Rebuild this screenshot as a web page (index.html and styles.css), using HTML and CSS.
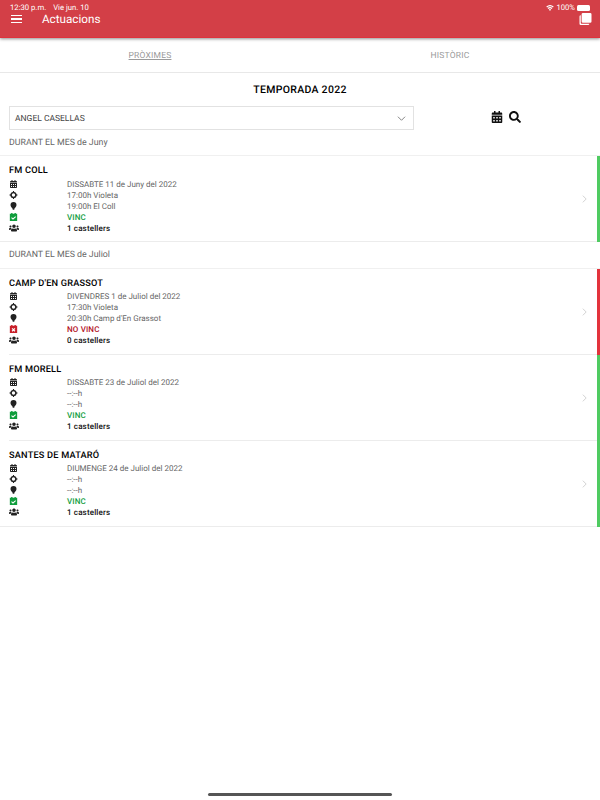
FILE: index.html
```html
<!DOCTYPE html>
<html lang="ca">
<head>
<meta charset="utf-8">
<title>Actuacions</title>
<link rel="stylesheet" href="styles.css">
</head>
<body>
<svg width="0" height="0" class="defs">
  <defs>
    <symbol id="cal" viewBox="0 0 448 512"><path d="M0 464c0 26.500 21.500 48 48 48h352c26.500 0 48-21.500 48-48V192H0v272zm320-196c0-6.600 5.400-12 12-12h40c6.600 0 12 5.400 12 12v40c0 6.600-5.400 12-12 12h-40c-6.600 0-12-5.400-12-12v-40zm0 128c0-6.600 5.400-12 12-12h40c6.600 0 12 5.400 12 12v40c0 6.600-5.400 12-12 12h-40c-6.600 0-12-5.400-12-12v-40zM192 268c0-6.600 5.400-12 12-12h40c6.600 0 12 5.400 12 12v40c0 6.600-5.400 12-12 12h-40c-6.600 0-12-5.400-12-12v-40zm0 128c0-6.600 5.400-12 12-12h40c6.600 0 12 5.400 12 12v40c0 6.600-5.400 12-12 12h-40c-6.600 0-12-5.400-12-12v-40zM64 268c0-6.600 5.400-12 12-12h40c6.600 0 12 5.400 12 12v40c0 6.600-5.400 12-12 12H76c-6.600 0-12-5.400-12-12v-40zm0 128c0-6.600 5.400-12 12-12h40c6.600 0 12 5.400 12 12v40c0 6.600-5.400 12-12 12H76c-6.600 0-12-5.400-12-12v-40zM400 64h-48V16c0-8.800-7.200-16-16-16h-32c-8.800 0-16 7.200-16 16v48H160V16c0-8.800-7.200-16-16-16h-32c-8.800 0-16 7.200-16 16v48H48C21.500 64 0 85.500 0 112v48h448v-48c0-26.500-21.500-48-48-48z"/></symbol>
    <symbol id="target" viewBox="0 0 24 24"><path d="M10.500 0h3v2.200a10 10 0 0 1 8.300 8.300H24v3h-2.200a10 10 0 0 1-8.300 8.300V24h-3v-2.200a10 10 0 0 1-8.300-8.300H0v-3h2.200a10 10 0 0 1 8.300-8.300zM12 7a5 5 0 1 0 0 10 5 5 0 0 0 0-10z"/></symbol>
    <symbol id="pin" viewBox="0 0 24 24"><path d="M12 0a9 9 0 0 1 9 9c0 5-5 9-7 12h-4C8 18 3 14 3 9a9 9 0 0 1 9-9zM9.500 22h5v2h-5z"/></symbol>
    <symbol id="calok" viewBox="0 0 24 24"><path d="M5 0h4v2h6V0h4v2h4v22H1V2h4zM17.500 9.500 10.500 16l-3.500-3-2 2.200 5.500 5 9-8.500z" fill-rule="evenodd"/></symbol>
    <symbol id="calno" viewBox="0 0 24 24"><path d="M5 0h4v2h6V0h4v2h4v22H1V2h4zM9 9l-2.500 2.500L9.500 14.500l-3 3L9 20l3-3 3 3 2.500-2.500-3-3 3-3L15 9l-3 3z" fill-rule="evenodd"/></symbol>
    <symbol id="users" viewBox="0 0 640 512"><path d="M96 224c35.300 0 64-28.700 64-64s-28.700-64-64-64-64 28.700-64 64 28.700 64 64 64zm448 0c35.300 0 64-28.700 64-64s-28.700-64-64-64-64 28.700-64 64 28.700 64 64 64zm32 32h-64c-17.600 0-33.500 7.100-45.100 18.600 40.300 22.100 68.900 62 75.100 109.400h66c17.700 0 32-14.300 32-32v-32c0-35.300-28.700-64-64-64zm-256 0c61.900 0 112-50.100 112-112S381.900 32 320 32 208 82.100 208 144s50.100 112 112 112zm76.800 32h-8.300c-20.800 10-43.900 16-68.500 16s-47.600-6-68.500-16h-8.300C179.600 288 128 339.600 128 403.200V432c0 26.500 21.500 48 48 48h288c26.500 0 48-21.500 48-48v-28.800c0-63.600-51.600-115.200-115.200-115.200zm-223.700-13.400C161.500 263.100 145.600 256 128 256H64c-35.300 0-64 28.700-64 64v32c0 17.700 14.300 32 32 32h65.900c6.300-47.400 34.900-87.300 75.200-109.400z"/></symbol>
  </defs>
</svg>

<header class="appbar">
  <div class="status">
    <div class="status-left"><span>12:30 p.m.</span><span>Vie jun. 10</span></div>
    <div class="status-right">
      <svg class="wifi" viewBox="0 0 16 12"><path d="M8 12 5.700 9.200a3.600 3.600 0 0 1 4.600 0zM4.600 7.900 3.200 6.200a7.500 7.500 0 0 1 9.600 0l-1.400 1.700a5.300 5.300 0 0 0-6.800 0zM2.100 4.900.6 3.100a11.500 11.500 0 0 1 14.800 0l-1.500 1.800a9.200 9.200 0 0 0-11.800 0z"/></svg>
      <span>100%</span>
      <span class="battery"></span>
    </div>
  </div>
  <div class="toolbar">
    <div class="toolbar-left">
      <span class="burger"><i></i><i></i><i></i></span>
      <span class="app-title">Actuacions</span>
    </div>
    <svg class="copy" viewBox="0 0 14 14"><path d="M4 0h8.500A1.500 1.500 0 0 1 14 1.500V10a1.500 1.500 0 0 1-1.500 1.500H4A1.500 1.500 0 0 1 2.500 10V1.500A1.500 1.500 0 0 1 4 0z"/><path d="M0 4a1.500 1.500 0 0 1 1.500-1.500v8.800c0 .7.500 1.200 1.200 1.200h8.800A1.500 1.500 0 0 1 10 14H1.500A1.500 1.500 0 0 1 0 12.500z"/></svg>
  </div>
</header>

<nav class="tabs">
  <div class="tab"><span class="tab-active">PRÒXIMES</span></div>
  <div class="tab"><span>HISTÒRIC</span></div>
</nav>

<h1 class="season">TEMPORADA 2022</h1>

<div class="filter">
  <div class="select">
    <span>ANGEL CASELLAS</span>
    <svg class="chev-down" viewBox="0 0 12 7"><path d="M1 1l5 5 5-5"/></svg>
  </div>
  <div class="filter-icons">
    <svg class="ficon"><use href="#cal"/></svg>
    <svg class="ficon" viewBox="0 0 512 512"><path d="M505 442.700 405.300 343c-4.500-4.500-10.600-7-17-7H372c27.600-35.300 44-79.700 44-128C416 93.100 322.900 0 208 0S0 93.100 0 208s93.100 208 208 208c48.300 0 92.700-16.400 128-44v16.300c0 6.400 2.500 12.500 7 17l99.700 99.700c9.400 9.400 24.600 9.400 33.900 0l28.300-28.300c9.400-9.400 9.400-24.600.1-34zM208 336c-70.700 0-128-57.200-128-128 0-70.700 57.200-128 128-128 70.700 0 128 57.200 128 128 0 70.700-57.200 128-128 128z"/></svg>
  </div>
</div>

<p class="month">DURANT EL MES de Juny</p>

<article class="card ok full first">
  <div class="card-body">
    <h2>FM COLL</h2>
    <div class="row"><svg class="ic"><use href="#cal"/></svg><span>DISSABTE 11 de Juny del 2022</span></div>
    <div class="row"><svg class="ic"><use href="#target"/></svg><span>17:00h Violeta</span></div>
    <div class="row"><svg class="ic"><use href="#pin"/></svg><span>19:00h El Coll</span></div>
    <div class="row yes"><svg class="ic"><use href="#calok"/></svg><span>VINC</span></div>
    <div class="row count"><svg class="ic"><use href="#users"/></svg><span>1 castellers</span></div>
  </div>
  <svg class="chev" viewBox="0 0 7 12"><path d="M1 1l5 5-5 5"/></svg>
</article>

<p class="month month-tall">DURANT EL MES de Juliol</p>

<article class="card bad">
  <div class="card-body">
    <h2>CAMP D'EN GRASSOT</h2>
    <div class="row"><svg class="ic"><use href="#cal"/></svg><span>DIVENDRES 1 de Juliol del 2022</span></div>
    <div class="row"><svg class="ic"><use href="#target"/></svg><span>17:30h Violeta</span></div>
    <div class="row"><svg class="ic"><use href="#pin"/></svg><span>20:30h Camp d'En Grassot</span></div>
    <div class="row no"><svg class="ic"><use href="#calno"/></svg><span>NO VINC</span></div>
    <div class="row count"><svg class="ic"><use href="#users"/></svg><span>0 castellers</span></div>
  </div>
  <svg class="chev" viewBox="0 0 7 12"><path d="M1 1l5 5-5 5"/></svg>
</article>

<article class="card ok">
  <div class="card-body">
    <h2>FM MORELL</h2>
    <div class="row"><svg class="ic"><use href="#cal"/></svg><span>DISSABTE 23 de Juliol del 2022</span></div>
    <div class="row"><svg class="ic"><use href="#target"/></svg><span>--:--h</span></div>
    <div class="row"><svg class="ic"><use href="#pin"/></svg><span>--:--h</span></div>
    <div class="row yes"><svg class="ic"><use href="#calok"/></svg><span>VINC</span></div>
    <div class="row count"><svg class="ic"><use href="#users"/></svg><span>1 castellers</span></div>
  </div>
  <svg class="chev" viewBox="0 0 7 12"><path d="M1 1l5 5-5 5"/></svg>
</article>

<article class="card ok full">
  <div class="card-body">
    <h2>SANTES DE MATARÓ</h2>
    <div class="row"><svg class="ic"><use href="#cal"/></svg><span>DIUMENGE 24 de Juliol del 2022</span></div>
    <div class="row"><svg class="ic"><use href="#target"/></svg><span>--:--h</span></div>
    <div class="row"><svg class="ic"><use href="#pin"/></svg><span>--:--h</span></div>
    <div class="row yes"><svg class="ic"><use href="#calok"/></svg><span>VINC</span></div>
    <div class="row count"><svg class="ic"><use href="#users"/></svg><span>1 castellers</span></div>
  </div>
  <svg class="chev" viewBox="0 0 7 12"><path d="M1 1l5 5-5 5"/></svg>
</article>

<div class="home-indicator"></div>
</body>
</html>
```

FILE: styles.css
```css
* { box-sizing: border-box; }
html, body { margin: 0; height: 100%; }
body {
  position: relative;
  width: 600px;
  height: 800px;
  overflow: hidden;
  background: #fff;
  font-family: Roboto, "Liberation Sans", sans-serif;
  color: #000;
  text-rendering: geometricPrecision;
}
.defs { position: absolute; }

.appbar {
  height: 38px;
  background: #d33f47;
  border-bottom: 1px solid #e0323c;
  box-shadow: 0 1px 3px rgba(0, 0, 0, .45);
  color: #fff;
  position: relative;
}
.status {
  height: 14px;
  padding: 1px 10px 0;
  display: flex;
  justify-content: space-between;
  align-items: center;
  font-size: 7.700px;
}
.status-left { display: flex; gap: 7px; }
.status-right { display: flex; align-items: center; gap: 2px; }
.wifi { width: 8px; height: 6px; fill: #fff; }
.battery {
  width: 13px;
  height: 6px;
  background: #fff;
  border-radius: 1.500px;
}
.toolbar {
  height: 10px;
  padding: 0 8px 0 11px;
  display: flex;
  justify-content: space-between;
  align-items: center;
}
.toolbar-left { display: flex; align-items: center; gap: 20px; }
.burger { display: flex; flex-direction: column; gap: 2px; width: 11px; }
.burger i { display: block; height: 1.500px; background: #fff; }
.app-title { font-size: 11.700px; line-height: 12px; }
.copy { width: 13px; height: 12px; fill: #fff; flex: none; }

.tabs {
  display: flex;
  height: 35px;
  padding-top: 1px;
  border-bottom: 1px solid #e8e8e8;
}
.tab {
  flex: 1;
  display: flex;
  align-items: center;
  justify-content: center;
  font-size: 8.500px;
  letter-spacing: .2px;
  color: #9a9a9a;
}
.tab-active { text-decoration: underline; }

.season {
  margin: 0;
  padding-top: 10px;
  height: 33px;
  font-size: 10.500px;
  line-height: 13px;
  font-weight: 500;
  letter-spacing: .3px;
  text-align: center;
}

.filter { display: flex; padding-left: 9px; align-items: center; }
.select {
  width: 405px;
  height: 24px;
  border: 1px solid #e2e2e2;
  padding: 1px 7px 0 5px;
  display: flex;
  justify-content: space-between;
  align-items: center;
  font-size: 8.500px;
  color: #444;
}
.chev-down { width: 9px; height: 5px; fill: none; stroke: #555; stroke-width: 1; }
.filter-icons {
  flex: 1;
  display: flex;
  justify-content: center;
  gap: 6px;
  padding-right: 2px;
  margin-top: -2px;
}
.ficon { width: 12px; height: 12px; fill: #111; }

.month {
  margin: 0;
  height: 26px;
  font-size: 8.800px;
  line-height: 12px;
  padding: 7px 0 0 9px;
  color: #666;
  border-bottom: 1px solid #f0f0f0;
}
.month-tall { height: 27px; }

.card {
  position: relative;
  height: 86px;
  display: flex;
  align-items: center;
  justify-content: space-between;
  padding-right: 10px;
}
.card::after {
  content: "";
  position: absolute;
  left: 9px;
  right: 0;
  bottom: 0;
  height: 1px;
  background: #ececec;
}
.card.full::after { left: 0; }
.card.ok { border-right: 3px solid #4fcb61; }
.card.bad { border-right: 3px solid #e3333c; }
.card-body { flex: 1; align-self: flex-start; padding-top: 8.500px; }
.card h2 {
  margin: 0 0 1px;
  padding-left: 9px;
  font-size: 9.200px;
  line-height: 12px;
  font-weight: 500;
  letter-spacing: .2px;
}
.card.first h2 { margin-bottom: 2px; }
.row {
  display: flex;
  align-items: center;
  height: 11px;
  padding-left: 9px;
  font-size: 8px;
  color: #666;
}
.ic { width: 9px; height: 8px; fill: #222; margin-right: 49px; flex: none; }
.row.count .ic { width: 10px; height: 8px; margin-right: 48px; }
.row.yes { color: #0f9d3c; font-weight: 500; letter-spacing: .15px; }
.row.yes .ic { fill: #0f9d3c; }
.row.no { color: #b3101c; font-weight: 500; letter-spacing: .15px; }
.row.no .ic { fill: #c8202a; }
.row.count { color: #111; font-weight: 500; letter-spacing: .15px; }
.chev { width: 5px; height: 8px; fill: none; stroke: #c8c8c8; stroke-width: 1.200; flex: none; }

.home-indicator {
  position: absolute;
  left: 208px;
  bottom: 4px;
  width: 184px;
  height: 3px;
  border-radius: 2px;
  background: #555;
}
```
